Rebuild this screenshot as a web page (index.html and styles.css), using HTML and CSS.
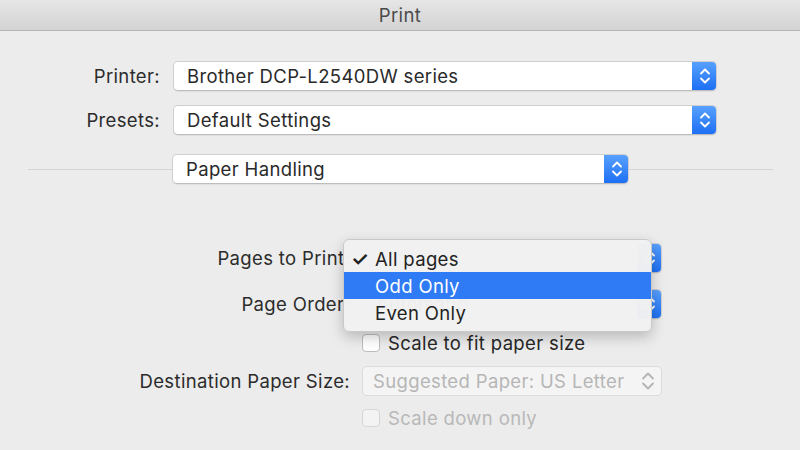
FILE: index.html
```html
<!DOCTYPE html>
<html>
<head>
<meta charset="utf-8">
<link rel="stylesheet" href="styles.css">
</head>
<body>
<div class="window">
  <div class="titlebar">Print</div>
  <div class="content">
    <div class="top-form">
      <div class="label">Printer:</div>
      <div class="popup wide"><span class="ptext">Brother DCP-L2540DW series</span><span class="stepper"><svg viewBox="0 0 24 30" width="24" height="30"><path d="M8 12.5l4-4 4 4M8 17.5l4 4 4-4" fill="none" stroke="#fff" stroke-width="1.8" stroke-linecap="round" stroke-linejoin="round"/></svg></span></div>
      <div class="label">Presets:</div>
      <div class="popup wide"><span class="ptext">Default Settings</span><span class="stepper"><svg viewBox="0 0 24 30" width="24" height="30"><path d="M8 12.5l4-4 4 4M8 17.5l4 4 4-4" fill="none" stroke="#fff" stroke-width="1.8" stroke-linecap="round" stroke-linejoin="round"/></svg></span></div>
    </div>
    <div class="sep-row">
      <div class="line left"></div>
      <div class="popup section"><span class="ptext">Paper Handling</span><span class="stepper"><svg viewBox="0 0 24 30" width="24" height="30"><path d="M8 12.5l4-4 4 4M8 17.5l4 4 4-4" fill="none" stroke="#fff" stroke-width="1.8" stroke-linecap="round" stroke-linejoin="round"/></svg></span></div>
      <div class="line right"></div>
    </div>
    <div class="bottom-form">
      <div class="label">Pages to Print:</div>
      <div class="popup mid"><span class="ptext">All pages</span><span class="stepper"><svg viewBox="0 0 24 30" width="24" height="30"><path d="M8 12.5l4-4 4 4M8 17.5l4 4 4-4" fill="none" stroke="#fff" stroke-width="1.8" stroke-linecap="round" stroke-linejoin="round"/></svg></span></div>
      <div class="label">Page Order:</div>
      <div class="popup mid"><span class="ptext">Automatic</span><span class="stepper"><svg viewBox="0 0 24 30" width="24" height="30"><path d="M8 12.5l4-4 4 4M8 17.5l4 4 4-4" fill="none" stroke="#fff" stroke-width="1.8" stroke-linecap="round" stroke-linejoin="round"/></svg></span></div>
      <div class="label"></div>
      <label class="check"><span class="box"></span><span>Scale to fit paper size</span></label>
      <div class="label">Destination Paper Size:</div>
      <div class="popup mid disabled"><span class="ptext">Suggested Paper: US Letter</span><span class="dis-arrows"><svg viewBox="0 0 18 30" width="18" height="30"><path d="M4 12.5l5-5 5 5M4 17.5l5 5 5-5" fill="none" stroke="#b3b3b3" stroke-width="1.8" stroke-linecap="round" stroke-linejoin="round"/></svg></span></div>
      <div class="label"></div>
      <label class="check disabled"><span class="box"></span><span>Scale down only</span></label>
    </div>
    <div class="menu">
      <div class="item"><span class="tick">✓</span>All pages</div>
      <div class="item active"><span class="tick"></span>Odd Only</div>
      <div class="item"><span class="tick"></span>Even Only</div>
    </div>
  </div>
</div>
</body>
</html>
```

FILE: styles.css
```css
* { box-sizing: border-box; }
html, body { margin: 0; padding: 0; }
body {
  width: 800px;
  height: 450px;
  overflow: hidden;
  background: #ececec;
  font-family: "Inter", "Liberation Sans", sans-serif;
  font-size: 18.5px;
  letter-spacing: 0.35px;
  color: #262626;
}
.window { width: 800px; height: 450px; }
.titlebar {
  height: 31px;
  background: linear-gradient(#e6e6e6, #d3d3d3);
  border-bottom: 1px solid #b3b3b3;
  text-align: center;
  line-height: 31px;
  color: #4a4a4a;
  font-size: 18.5px;
}
.content { position: relative; height: 419px; }
.top-form {
  display: grid;
  grid-template-columns: 160px 544px;
  column-gap: 13px;
  row-gap: 14px;
  padding-top: 30px;
  align-items: center;
}
.label { text-align: right; color: #2b2b2b; white-space: nowrap; }
.popup {
  height: 30px;
  display: flex;
  align-items: center;
  background: #fff;
  border: 1px solid #cfcfcf;
  border-bottom-color: #bdbdbd;
  border-radius: 5px;
  box-shadow: 0 1px 1px rgba(0,0,0,0.06);
  overflow: hidden;
}
.ptext { flex: 1; padding-left: 13px; white-space: nowrap; color: #2a2a2a; }
.stepper {
  width: 25px;
  align-self: stretch;
  margin: -1px -1px -1px 0;
  background: linear-gradient(#5aa2ff, #1b6ef3);
  display: flex;
  align-items: center;
  justify-content: center;
  border-radius: 0 5px 5px 0;
}
.sep-row {
  display: flex;
  align-items: center;
  margin-top: 19px;
  padding-left: 28px;
  padding-right: 27px;
}
.line { height: 1px; background: #d4d4d4; flex: 1; }
.section { width: 457px; flex: none; }
.bottom-form {
  display: grid;
  grid-template-columns: 350px 300px;
  column-gap: 12px;
  margin-top: 59px;
  align-items: center;
}
.bottom-form > :nth-child(1), .bottom-form > :nth-child(2) { margin-bottom: 16px; }
.bottom-form > :nth-child(3), .bottom-form > :nth-child(4) { margin-bottom: 15px; }
.bottom-form > :nth-child(5), .bottom-form > :nth-child(6) { margin-bottom: 14px; }
.bottom-form > :nth-child(7), .bottom-form > :nth-child(8) { margin-bottom: 13px; }
.check { display: flex; align-items: center; gap: 8px; height: 18px; color: #262626; }
.box {
  width: 18px; height: 18px;
  flex: none;
  background: #fff;
  border: 1px solid #bdbdbd;
  border-radius: 4px;
}
.check.disabled { color: #b8b8b8; }
.check.disabled .box { background: #f3f3f3; border-color: #d6d6d6; }
.popup.disabled { background: #f4f4f4; border-color: #dcdcdc; box-shadow: none; }
.popup.disabled .ptext { color: #b6b6b6; padding-left: 10px; }
.dis-arrows { width: 22px; display: flex; align-items: center; }
.menu {
  position: absolute;
  left: 343px;
  top: 208px;
  width: 309px;
  height: 93px;
  background: rgba(241,241,241,0.98);
  border: 1px solid #c9c9c9;
  border-radius: 6px;
  box-shadow: 0 5px 14px rgba(0,0,0,0.22);
  padding-top: 5px;
}
.item {
  height: 27px;
  display: flex;
  align-items: center;
  color: #222;
}
.tick { width: 31px; padding-left: 7px; font-size: 20px; font-weight: 600; }
.item.active { background: #2f7bf5; color: #fff; }
```
